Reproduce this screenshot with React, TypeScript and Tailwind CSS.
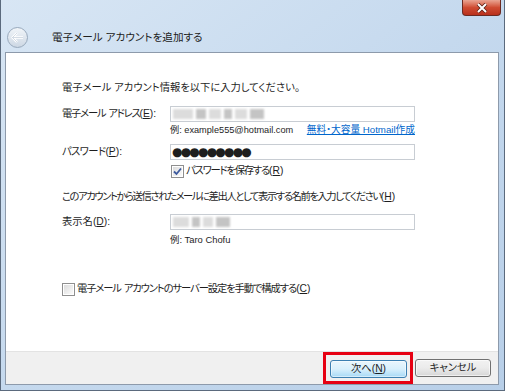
const jp = "font-['Liberation_Sans','Noto_Sans_CJK_JP',sans-serif] [font-feature-settings:'palt']";

function CheckBox({ checked }: { checked?: boolean }) {
  return (
    <span className="w-[13px] h-[13px] border border-[#8f8f8f] bg-white p-[1px] flex shrink-0">
      <span className="flex-1 bg-gradient-to-br from-[#dcdcdc] to-[#fbfbfb] flex items-center justify-center">
        {checked && (
          <svg width="9" height="9" viewBox="0 0 9 9">
            <path d="M1 4.5 L3.5 7 L8 1.5" fill="none" stroke="#3d5a9e" strokeWidth="1.8" />
          </svg>
        )}
      </span>
    </span>
  );
}

function BlurValue({ w }: { w: number[] }) {
  return (
    <div className="flex items-center gap-[3px] blur-[0.8px] pl-[2px]">
      {w.map((x, i) => (
        <span
          key={i}
          style={{ width: x }}
          className={i % 2 ? "h-[10px] bg-[#c4c4c4]" : "h-[10px] bg-[#dcdcdc]"}
        />
      ))}
    </div>
  );
}

export default function App() {
  return (
    <div className={`w-[505px] h-[391px] flex flex-col border-x border-b border-[#5b6a7d] bg-gradient-to-br from-[#d8e6f4] via-[#c5d9ee] to-[#b8cfe8] relative text-[10.3px] text-[#1e1e1e] whitespace-nowrap ${jp}`}>
      {/* close button */}
      <div className="absolute top-0 right-[3px] w-[39px] h-[16px] rounded-b-[4px] border border-[#6b2a22] border-t-0 bg-gradient-to-b from-[#e9a493] via-[#cf4b32] to-[#b8301c] flex items-center justify-center">
        <svg width="12" height="10" viewBox="0 0 12 10">
          <path d="M2 1 L10 9 M10 1 L2 9" stroke="#5a2116" strokeWidth="3.6" />
          <path d="M2 1 L10 9 M10 1 L2 9" stroke="#ffffff" strokeWidth="2" />
        </svg>
      </div>

      {/* title bar */}
      <div className="h-[52px] flex items-start pt-[27px] pl-[6px]">
        <span className="w-[21px] h-[21px] rounded-full border border-[#98a9bc] bg-gradient-to-b from-[#f1f5f9] to-[#cdd8e4] flex items-center justify-center">
          <svg width="13" height="11" viewBox="0 0 13 11">
            <path d="M6 1 L1.5 5.5 L6 10 M1.5 5.5 H12" fill="none" stroke="#ffffff" strokeWidth="2.4" strokeLinejoin="round" />
            <path d="M6 1 L1.5 5.5 L6 10 M1.5 5.5 H12" fill="none" stroke="#b7c5d4" strokeWidth="0.6" />
          </svg>
        </span>
        <span className="ml-[24px] mt-[2px] leading-[16px] text-[10.6px] text-[#202020]">電子メール アカウントを追加する</span>
      </div>

      {/* panel */}
      <div className="flex-1 ml-[4px] mr-[5px] mb-[5px] border border-[#8d9aab] flex flex-col">
        <div className="flex-1 bg-white pl-[56px] flex flex-col">
          <p className="mt-[27px] leading-[16px]">電子メール アカウント情報を以下に入力してください。</p>

          <div className="mt-[10px] flex items-center">
            <span className="w-[108px] leading-[16px]">
              <span className="tracking-[-1.2px]">電子メール</span> <span className="tracking-[-1.2px]">アドレス</span>(<span className="underline">E</span>):
            </span>
            <div className="w-[245px] h-[16px] border border-[#c8cdd3] flex items-center">
              <BlurValue w={[20, 10, 12, 8, 12, 14]} />
            </div>
          </div>

          <div className="ml-[108px] w-[245px] mt-[1px] flex justify-between items-center leading-[14px]">
            <span className="text-[9.2px]">例: example555@hotmail.com</span>
            <span className="text-[#0066cc] underline text-[9.7px]">無料・大容量 Hotmail作成</span>
          </div>

          <div className="mt-[7px] flex items-center">
            <span className="w-[108px] leading-[16px]">
              <span className="tracking-[-0.6px]">パスワード</span>(<span className="underline">P</span>):
            </span>
            <div className="w-[245px] h-[16px] border border-[#c8cdd3] flex items-center pl-[1px]">
              <span className="text-[12px] leading-[12px] tracking-[-1.8px] font-['DejaVu_Sans',sans-serif]">●●●●●●●●●</span>
            </div>
          </div>

          <div className="ml-[109px] mt-[4px] flex items-center gap-[2px] leading-[14px]">
            <CheckBox checked />
            <span>
              <span className="tracking-[-1.2px]">パスワードを保存する</span>(<span className="underline">R</span>)
            </span>
          </div>

          <p className="mt-[11px] leading-[16px]">
            <span className="tracking-[-1.4px]">このアカウントから送信されたメールに差出人として表示する名前を入力してください</span>(<span className="underline">H</span>)
          </p>

          <div className="mt-[9px] flex items-center">
            <span className="w-[108px] leading-[16px]">表示名(<span className="underline">D</span>):</span>
            <div className="w-[245px] h-[16px] border border-[#c8cdd3] flex items-center">
              <BlurValue w={[16, 8, 10, 14]} />
            </div>
          </div>

          <div className="ml-[108px] mt-[3px] leading-[14px] text-[9.4px]">例: Taro Chofu</div>

          <div className="mt-[35px] flex items-center gap-[2px] leading-[14px]">
            <CheckBox />
            <span>
              <span className="tracking-[-1.1px]">電子メール</span> <span className="tracking-[-1.1px]">アカウントのサーバー設定を手動で構成する</span>(<span className="underline">C</span>)
            </span>
          </div>
        </div>

        {/* footer */}
        <div className="h-[33px] bg-[#f0f0f0] border-t border-[#e3e3e3] flex items-center justify-end pr-[7px] gap-[2px]">
          <div className="border-[3px] border-[#e60012] pl-[4px] pr-[3px] pt-[5px] pb-[3px] h-[32px]">
            <button className="w-[77px] h-[18px] rounded-[3px] border border-[#3c7fb1] bg-gradient-to-b from-[#eaf6fd] via-[#d9f0fc] to-[#a7d9f5] shadow-[inset_0_0_0_1px_#ffffff80] text-[10.3px] leading-[14px] text-[#1e1e1e]">
              次へ(<span className="underline">N</span>)
            </button>
          </div>
          <button className="w-[76px] h-[18px] rounded-[3px] border border-[#707070] bg-gradient-to-b from-[#f2f2f2] via-[#ebebeb] to-[#d6d6d6] shadow-[inset_0_0_0_1px_#ffffffa0] text-[10.3px] leading-[14px] text-[#1e1e1e]">
            キャンセル
          </button>
        </div>
      </div>
    </div>
  );
}
